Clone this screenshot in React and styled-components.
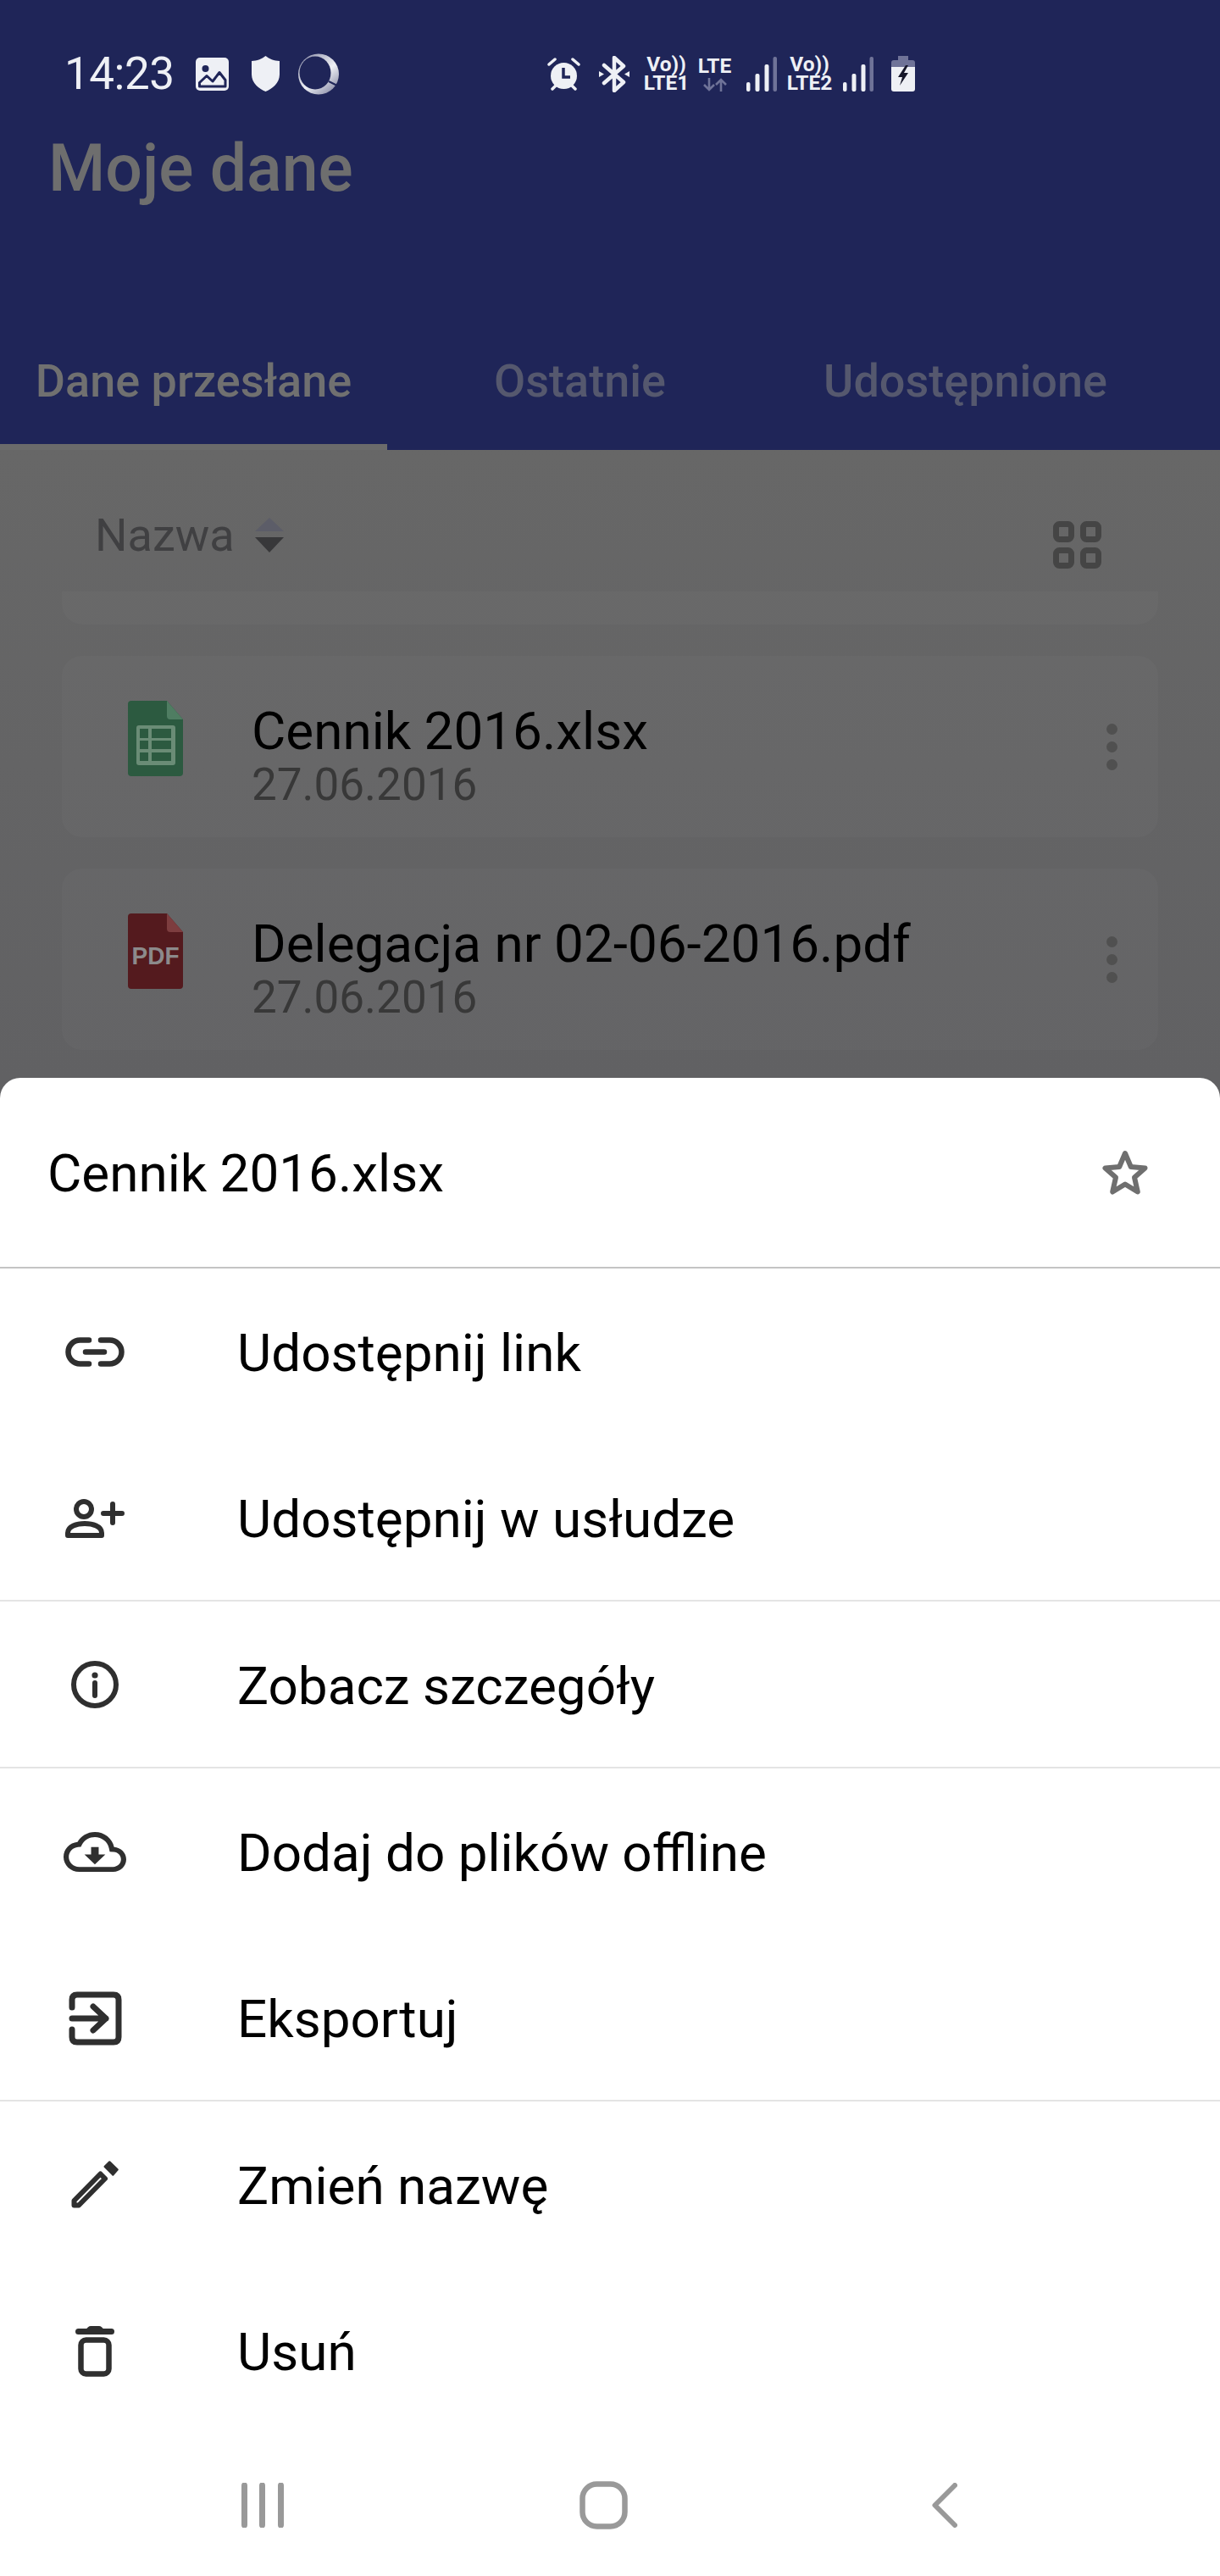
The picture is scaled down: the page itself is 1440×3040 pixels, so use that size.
import React from "react";
import styled, { createGlobalStyle } from "styled-components";

const NAVY = "#1f2558";
const LIGHT = "#eef0f5";
const MUTED = "#6f7398";
const INK = "#2f2f2f";

const GlobalStyle = createGlobalStyle`
	html, body {
		margin: 0;
		padding: 0;
		background: #646464;
	}
	* {
		box-sizing: border-box;
	}
`;

function ImageIcon() {
	return (
		<svg width="39" height="39" viewBox="0 0 39 39">
			<rect width="39" height="39" rx="5" fill={LIGHT} />
			<circle cx="11.5" cy="13" r="4" fill={NAVY} />
			<path d="M4.5 34V29.5L13 21.5L20 28L28 17.5L35 26.5V34Z" fill={LIGHT} stroke={NAVY} strokeWidth="3" strokeLinejoin="round" />
		</svg>
	);
}

function ShieldIcon() {
	return (
		<svg width="33" height="42" viewBox="0 0 33 42">
			<path d="M16.5 0C20 3 27 6 33 6V22C33 32 24 39 16.5 42C9 39 0 32 0 22V6C6 6 13 3 16.5 0Z" fill={LIGHT} />
		</svg>
	);
}

function RingIcon() {
	return (
		<svg width="48" height="49" viewBox="0 0 48 49">
			<defs>
				<linearGradient id="ring" x1="0.1" y1="0" x2="0.9" y2="1">
					<stop offset="0" stopColor="#8a8da8" />
					<stop offset="0.55" stopColor={LIGHT} />
					<stop offset="1" stopColor="#7f829f" />
				</linearGradient>
			</defs>
			<circle cx="24" cy="24.5" r="24" fill="url(#ring)" />
			<ellipse cx="20" cy="23" rx="18.5" ry="19.5" fill={NAVY} />
			<path d="M36 33L46 38" stroke={NAVY} strokeWidth="2" />
		</svg>
	);
}

function AlarmIcon() {
	return (
		<svg width="39" height="39" viewBox="0 0 39 39">
			<circle cx="19.5" cy="21.5" r="15.5" fill={LIGHT} />
			<path d="M2 8L9 2M37 8L30 2M6 37L10 33M33 37L29 33" stroke={LIGHT} strokeWidth="3.5" strokeLinecap="round" />
			<path d="M19 12V23H27" fill="none" stroke={NAVY} strokeWidth="3.5" />
		</svg>
	);
}

function BluetoothIcon() {
	return (
		<svg width="36" height="43" viewBox="0 0 36 43">
			<path d="M6 11L29 31L18 41V2L29 12L6 32" fill="none" stroke={LIGHT} strokeWidth="4.5" strokeLinecap="round" strokeLinejoin="round" />
			<path d="M0 18L6 21.5L0 25ZM36 18L30 21.5L36 25Z" fill={LIGHT} />
		</svg>
	);
}

function SignalIcon() {
	return (
		<svg width="36" height="41" viewBox="0 0 36 41">
			<rect x="0" y="30" width="4.5" height="11" rx="2" fill={LIGHT} />
			<rect x="10.5" y="20" width="5" height="21" rx="2" fill={LIGHT} />
			<rect x="21.5" y="9" width="5" height="32" rx="2" fill={LIGHT} />
			<rect x="31.5" y="0" width="4.5" height="41" rx="2" fill={MUTED} />
		</svg>
	);
}

function ArrowsIcon() {
	return (
		<svg width="30" height="16" viewBox="0 0 30 16">
			<path d="M8 0V14M2 8L8 14L14 8M22 16V2M16 8L22 2L28 8" fill="none" stroke={MUTED} strokeWidth="2.6" />
		</svg>
	);
}

function BatteryIcon() {
	return (
		<svg width="28" height="42" viewBox="0 0 28 42">
			<path d="M8 0H20V5H25Q28 5 28 8V13H0V8Q0 5 3 5H8Z" fill={MUTED} />
			<path d="M0 13H28V39Q28 42 25 42H3Q0 42 0 39Z" fill={LIGHT} />
			<path d="M17 11L8 25H13L10 35L20 20H15L20 11Z" fill="#16172a" />
		</svg>
	);
}

function SortIcon() {
	return (
		<svg width="34" height="41" viewBox="0 0 34 41">
			<path d="M17 0L34 16H0Z" fill="#5c5d68" />
			<path d="M0 23H34L17 41Z" fill="#38383a" />
		</svg>
	);
}

function GridIcon() {
	return (
		<svg width="57" height="56" viewBox="0 0 57 56">
			<g fill="none" stroke="#454545" strokeWidth="7">
				<rect x="3.5" y="3.5" width="18" height="18" rx="4" />
				<rect x="35.5" y="3.5" width="18" height="18" rx="4" />
				<rect x="3.5" y="34.5" width="18" height="18" rx="4" />
				<rect x="35.5" y="34.5" width="18" height="18" rx="4" />
			</g>
		</svg>
	);
}

function SheetFileIcon() {
	return (
		<svg width="65" height="89" viewBox="0 0 65 89">
			<path d="M4 0H46L65 22V85Q65 89 61 89H4Q0 89 0 85V4Q0 0 4 0Z" fill="#2c5a40" />
			<path d="M46 0L65 22H50Q46 22 46 18Z" fill="#4f7d62" />
			<rect x="10" y="29" width="46" height="47" rx="3" fill="#6a8c76" />
			<path d="M14 33H24V44H14ZM28 33H51V44H28ZM14 47H24V57H14ZM28 47H51V57H28ZM14 61H24V71H14ZM28 61H51V71H28Z" fill="#2c5a40" />
		</svg>
	);
}

function PdfFileIcon() {
	return (
		<svg width="65" height="89" viewBox="0 0 65 89">
			<path d="M4 0H46L65 22V85Q65 89 61 89H4Q0 89 0 85V4Q0 0 4 0Z" fill="#541a1e" />
			<path d="M46 0L65 22H50Q46 22 46 18Z" fill="#7d3d3f" />
			<text x="32.5" y="60" textAnchor="middle" fontFamily="Liberation Sans, sans-serif" fontWeight="700" fontSize="30" fill="#8c8a8b" textLength="56" lengthAdjust="spacingAndGlyphs">PDF</text>
		</svg>
	);
}

function StarIcon() {
	return (
		<svg width="56" height="56" viewBox="0 0 56 56">
			<path d="M28 5L34.8 21L51.5 22.5L39 33.5L42.8 50.5L28 41.5L13.2 50.5L17 33.5L4.5 22.5L21.2 21Z" fill="none" stroke="#6f6f6f" strokeWidth="6" strokeLinejoin="round" />
		</svg>
	);
}

function LinkIcon() {
	return (
		<svg width="70" height="35" viewBox="0 0 70 35">
			<path d="M28 3.5H17.5A14 14 0 0 0 17.5 31.5H28M42 3.5H52.5A14 14 0 0 1 52.5 31.5H42M24 17.5H46" fill="none" stroke={INK} strokeWidth="6.5" strokeLinecap="round" />
		</svg>
	);
}

function PersonAddIcon() {
	return (
		<svg width="70" height="46" viewBox="0 0 70 46">
			<g fill="none" stroke={INK} strokeWidth="6" strokeLinecap="round" strokeLinejoin="round">
				<circle cx="22" cy="12" r="9" />
				<path d="M3 43V40C3 32 14 29 23 29S43 32 43 40V43Z" />
				<path d="M45 17H67M56 6V28" />
			</g>
		</svg>
	);
}

function InfoIcon() {
	return (
		<svg width="56" height="56" viewBox="0 0 56 56">
			<circle cx="28" cy="28" r="25" fill="none" stroke={INK} strokeWidth="6" />
			<circle cx="28" cy="17" r="3.6" fill={INK} />
			<path d="M28 26V41" stroke={INK} strokeWidth="6" strokeLinecap="round" />
		</svg>
	);
}

function CloudIcon() {
	return (
		<svg width="74" height="47" viewBox="0 4 24 16" preserveAspectRatio="none">
			<path
				fill={INK}
				d="M19.35 10.04C18.67 6.59 15.64 4 12 4 9.11 4 6.6 5.64 5.35 8.04 2.34 8.36 0 10.91 0 14c0 3.31 2.69 6 6 6h13c2.76 0 5-2.24 5-5 0-2.64-2.05-4.78-4.65-4.96zM19 18H6c-2.21 0-4-1.79-4-4 0-2.05 1.53-3.76 3.56-3.97l1.07-.11.5-.95C8.08 7.14 9.94 6 12 6c2.62 0 4.88 1.86 5.39 4.43l.3 1.5 1.53.11c1.56.1 2.78 1.41 2.78 2.96 0 1.65-1.35 3-3 3zm-5.55-8h-2.9v3H8l4 4 4-4h-2.55z"
			/>
		</svg>
	);
}

function ExportIcon() {
	return (
		<svg width="63" height="64" viewBox="0 0 63 64">
			<path d="M4 19V10Q4 4 10 4H53Q59 4 59 10V54Q59 60 53 60H10Q4 60 4 54V45M4 32H44M29 18L44 32L29 46" fill="none" stroke={INK} strokeWidth="7" strokeLinecap="round" strokeLinejoin="round" />
		</svg>
	);
}

function PencilIcon() {
	return (
		<svg width="56" height="56" viewBox="0 0 56 56">
			<path d="M3.5 52.5V47L34.5 15.5L40 21L9 52.5Z" fill="none" stroke={INK} strokeWidth="6" strokeLinejoin="round" />
			<path d="M45.3 1.5L54.5 10.5L49.3 16.5L39.8 6.8Z" fill={INK} stroke={INK} strokeWidth="2.5" strokeLinejoin="round" />
		</svg>
	);
}

function TrashIcon() {
	return (
		<svg width="46" height="60" viewBox="0 0 46 60">
			<path d="M3.5 6.5H42.5" stroke={INK} strokeWidth="7" strokeLinecap="round" />
			<path d="M12 5Q15 0 18 0H28Q31 0 34 5Z" fill={INK} />
			<rect x="6.5" y="16.5" width="33" height="40" rx="6" fill="none" stroke={INK} strokeWidth="6.5" />
		</svg>
	);
}

function RecentsIcon() {
	return (
		<svg width="50" height="53" viewBox="0 0 50 53">
			<path d="M3.5 3V50M24.5 3V50M46.5 3V50" stroke="#999" strokeWidth="7" strokeLinecap="round" />
		</svg>
	);
}

function HomeIcon() {
	return (
		<svg width="57" height="57" viewBox="0 0 57 57">
			<rect x="3.5" y="3.5" width="50" height="50" rx="17" fill="none" stroke="#999" strokeWidth="6.5" />
		</svg>
	);
}

function BackIcon() {
	return (
		<svg width="30" height="53" viewBox="0 0 30 53">
			<path d="M27 3L3.5 26.5L27 50" fill="none" stroke="#999" strokeWidth="6" strokeLinecap="round" strokeLinejoin="round" />
		</svg>
	);
}

const files = [
	{ name: "Cennik 2016.xlsx", date: "27.06.2016", icon: <SheetFileIcon /> },
	{ name: "Delegacja nr 02-06-2016.pdf", date: "27.06.2016", icon: <PdfFileIcon /> },
];

const menuGroups = [
	[
		{ label: "Udostępnij link", icon: <LinkIcon /> },
		{ label: "Udostępnij w usłudze", icon: <PersonAddIcon /> },
	],
	[{ label: "Zobacz szczegóły", icon: <InfoIcon /> }],
	[
		{ label: "Dodaj do plików offline", icon: <CloudIcon /> },
		{ label: "Eksportuj", icon: <ExportIcon /> },
	],
	[
		{ label: "Zmień nazwę", icon: <PencilIcon /> },
		{ label: "Usuń", icon: <TrashIcon /> },
	],
];

export default function App() {
	return (
		<Screen>
			<GlobalStyle />
			<Header>
				<StatusBar>
					<StatusLeft>
						<Clock>14:23</Clock>
						<ImageIcon />
						<ShieldIcon />
						<RingIcon />
					</StatusLeft>
					<StatusRight>
						<StatusSlot $gap={22}>
							<AlarmIcon />
						</StatusSlot>
						<StatusSlot $gap={18}>
							<BluetoothIcon />
						</StatusSlot>
						<StatusSlot $gap={11} $width={51}>
							<NetText>
								Vo))
								<br />
								LTE1
							</NetText>
						</StatusSlot>
						<StatusSlot $gap={17} $width={41}>
							<NetStack>
								<NetText>LTE</NetText>
								<ArrowsIcon />
							</NetStack>
						</StatusSlot>
						<StatusSlot $gap={12}>
							<SignalIcon />
						</StatusSlot>
						<StatusSlot $gap={13} $width={53}>
							<NetText>
								Vo))
								<br />
								LTE2
							</NetText>
						</StatusSlot>
						<StatusSlot $gap={21}>
							<SignalIcon />
						</StatusSlot>
						<StatusSlot>
							<BatteryIcon />
						</StatusSlot>
					</StatusRight>
				</StatusBar>
				<Title>Moje dane</Title>
				<Tabs>
					<Tab $active>Dane przesłane</Tab>
					<Tab>Ostatnie</Tab>
					<Tab>Udostępnione</Tab>
				</Tabs>
			</Header>

			<Content>
				<SortBar>
					<SortButton>
						Nazwa
						<SortIcon />
					</SortButton>
					<GridIcon />
				</SortBar>
				<ScrolledCard />
				{files.map((file) => (
					<FileCard key={file.name}>
						<FileIconSlot>{file.icon}</FileIconSlot>
						<FileText>
							<FileName>{file.name}</FileName>
							<FileDate>{file.date}</FileDate>
						</FileText>
						<Dots>
							<Dot />
							<Dot />
							<Dot />
						</Dots>
					</FileCard>
				))}
			</Content>

			<Sheet>
				<SheetHeader>
					<SheetTitle>Cennik 2016.xlsx</SheetTitle>
					<StarIcon />
				</SheetHeader>
				{menuGroups.map((group, i) => (
					<MenuGroup key={i} $last={i === menuGroups.length - 1}>
						{group.map((item) => (
							<MenuRow key={item.label}>
								<MenuIconSlot>{item.icon}</MenuIconSlot>
								<MenuLabel>{item.label}</MenuLabel>
							</MenuRow>
						))}
					</MenuGroup>
				))}
				<NavBar>
					<NavSlot>
						<RecentsIcon />
					</NavSlot>
					<NavSlot>
						<HomeIcon />
					</NavSlot>
					<NavSlot>
						<BackIcon />
					</NavSlot>
				</NavBar>
			</Sheet>
		</Screen>
	);
}

const Screen = styled.div`
	position: relative;
	width: 1440px;
	height: 3040px;
	overflow: hidden;
	display: flex;
	flex-direction: column;
	font-family: Roboto, "Noto Sans", sans-serif;
	background: linear-gradient(#676767 531px, #616163 1272px);
`;

const Header = styled.header`
	height: 531px;
	flex: none;
	background: ${NAVY};
	display: flex;
	flex-direction: column;
`;

const StatusBar = styled.div`
	height: 155px;
	flex: none;
	padding: 19px 0 0 76px;
	display: flex;
	align-items: center;
`;

const StatusLeft = styled.div`
	width: 570px;
	display: flex;
	align-items: center;
`;

const Clock = styled.span`
	width: 155px;
	font-size: 53px;
	letter-spacing: -0.5px;
	color: ${LIGHT};
	& + svg + svg {
		margin: 0 22px 0 27px;
	}
`;

const StatusRight = styled.div`
	display: flex;
	align-items: center;
`;

const StatusSlot = styled.div`
	display: flex;
	justify-content: center;
	width: ${(p) => (p.$width ? `${p.$width}px` : "auto")};
	margin-right: ${(p) => p.$gap || 0}px;
`;

const NetStack = styled.div`
	display: flex;
	flex-direction: column;
	align-items: center;
	gap: 3px;
`;

const NetText = styled.span`
	font-size: 24.5px;
	line-height: 22px;
	font-weight: 700;
	text-align: center;
	white-space: nowrap;
	color: ${LIGHT};
`;

const Title = styled.h1`
	margin: 0;
	padding-left: 57px;
	font-size: 77px;
	line-height: 88px;
	font-weight: 500;
	color: #6e6e6e;
`;

const Tabs = styled.div`
	margin-top: auto;
	height: 160px;
	display: flex;
`;

const Tab = styled.div`
	flex: 0 0 ${(p) => (p.$active ? 457 : 455)}px;
	padding-top: 47px;
	text-align: center;
	font-size: 54px;
	line-height: 64px;
	font-weight: 500;
	color: ${(p) => (p.$active ? "#707070" : "#55586e")};
	border-bottom: 7px solid ${(p) => (p.$active ? "#6b6b6b" : "transparent")};
`;

const Content = styled.main`
	padding: 0 73px;
	display: flex;
	flex-direction: column;
`;

const SortBar = styled.div`
	height: 167px;
	padding: 80px 67px 0 39px;
	display: flex;
	justify-content: space-between;
	align-items: flex-start;
	& > svg {
		margin-top: 4px;
	}
`;

const SortButton = styled.div`
	display: flex;
	align-items: center;
	gap: 24px;
	font-size: 54px;
	line-height: 41px;
	color: #404042;
`;

const ScrolledCard = styled.div`
	height: 39px;
	background: rgba(255, 255, 255, 0.02);
	border-radius: 0 0 24px 24px;
`;

const FileCard = styled.div`
	height: 214px;
	margin-top: 37px;
	padding: 0 48px 0 78px;
	display: flex;
	align-items: center;
	background: rgba(255, 255, 255, 0.025);
	border-radius: 24px;
`;

const FileIconSlot = styled.div`
	width: 146px;
	flex: none;
	display: flex;
	margin-bottom: 20px;
	& svg {
		display: block;
	}
`;

const FileText = styled.div`
	flex: 1;
	margin-top: 25px;
	display: flex;
	flex-direction: column;
`;

const FileName = styled.div`
	font-size: 62px;
	line-height: 64px;
	color: #000;
`;

const FileDate = styled.div`
	font-size: 53px;
	line-height: 62px;
	color: #383838;
`;

const Dots = styled.div`
	display: flex;
	flex-direction: column;
	gap: 8px;
`;

const Dot = styled.span`
	width: 13px;
	height: 13px;
	border-radius: 50%;
	background: #505050;
`;

const Sheet = styled.section`
	position: absolute;
	left: 0;
	right: 0;
	bottom: 0;
	height: 1768px;
	background: #fff;
	border-radius: 24px 24px 0 0;
	display: flex;
	flex-direction: column;
`;

const SheetHeader = styled.div`
	height: 225px;
	flex: none;
	padding: 0 84px 0 56px;
	display: flex;
	align-items: center;
	justify-content: space-between;
	border-bottom: 2px solid #c4c4c4;
`;

const SheetTitle = styled.div`
	font-size: 62px;
	padding-top: 2px;
	color: #000;
`;

const MenuGroup = styled.div`
	flex: none;
	box-shadow: ${(p) => (p.$last ? "none" : "inset 0 -2px 0 #e4e4e4")};
`;

const MenuRow = styled.div`
	height: 196.6px;
	padding-left: 58px;
	display: flex;
	align-items: center;
`;

const MenuIconSlot = styled.div`
	width: 108px;
	flex: none;
	margin-right: 114px;
	display: flex;
	justify-content: center;
	& svg {
		display: block;
	}
`;

const MenuLabel = styled.div`
	font-size: 62px;
	padding-top: 2px;
	color: #000;
`;

const NavBar = styled.nav`
	flex: 1;
	display: grid;
	grid-template-columns: 620px 185px 635px;
	align-items: center;
`;

const NavSlot = styled.div`
	display: flex;
	justify-content: center;
	&:first-child {
		justify-content: flex-end;
		padding-right: 285px;
	}
	&:last-child {
		justify-content: flex-start;
		padding-left: 295px;
	}
	& svg {
		display: block;
	}
`;
